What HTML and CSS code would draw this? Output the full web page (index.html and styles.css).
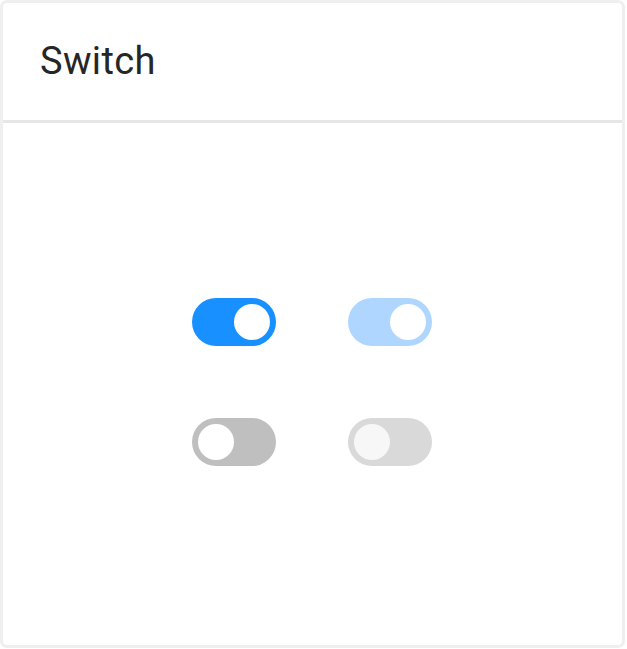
FILE: index.html
```html
<!DOCTYPE html>
<html lang="en">
<head>
<meta charset="utf-8">
<title>Switch</title>
<link rel="stylesheet" href="styles.css">
</head>
<body>
<div class="card">
  <div class="card-header">Switch</div>
  <div class="card-body">
    <div class="grid">
      <div class="switch on"><span class="knob"></span></div>
      <div class="switch on disabled"><span class="knob"></span></div>
      <div class="switch off"><span class="knob"></span></div>
      <div class="switch off disabled"><span class="knob"></span></div>
    </div>
  </div>
</div>
</body>
</html>
```
FILE: styles.css
```css
html, body {
  margin: 0;
  padding: 0;
  background: #ffffff;
}
body {
  font-family: Roboto, "Liberation Sans", sans-serif;
}
.card {
  box-sizing: border-box;
  width: 625px;
  height: 648px;
  border: 3px solid #efefef;
  border-radius: 7px;
  display: flex;
  flex-direction: column;
  background: #fff;
}
.card-header {
  box-sizing: border-box;
  height: 120px;
  border-bottom: 3px solid #e6e6e6;
  display: flex;
  align-items: center;
  padding-left: 37px;
  padding-bottom: 2px;
  font-size: 38px;
  letter-spacing: 0.35px;
  color: #262626;
}
.card-body {
  flex: 1;
  display: flex;
  align-items: center;
  justify-content: center;
  padding-bottom: 4px;
  padding-right: 1px;
}
.grid {
  display: grid;
  grid-template-columns: 84px 84px;
  gap: 72px;
}
.switch {
  box-sizing: border-box;
  width: 84px;
  height: 48px;
  border-radius: 24px;
  padding: 6px;
  display: flex;
}
.switch .knob {
  width: 36px;
  height: 36px;
  border-radius: 50%;
  background: #ffffff;
}
.switch.on {
  background: #1890ff;
  justify-content: flex-end;
}
.switch.on.disabled {
  background: #aed6ff;
}
.switch.off {
  background: #bfbfbf;
  justify-content: flex-start;
}
.switch.off.disabled {
  background: #d9d9d9;
}
.switch.off.disabled .knob {
  background: #f7f7f7;
}
```
